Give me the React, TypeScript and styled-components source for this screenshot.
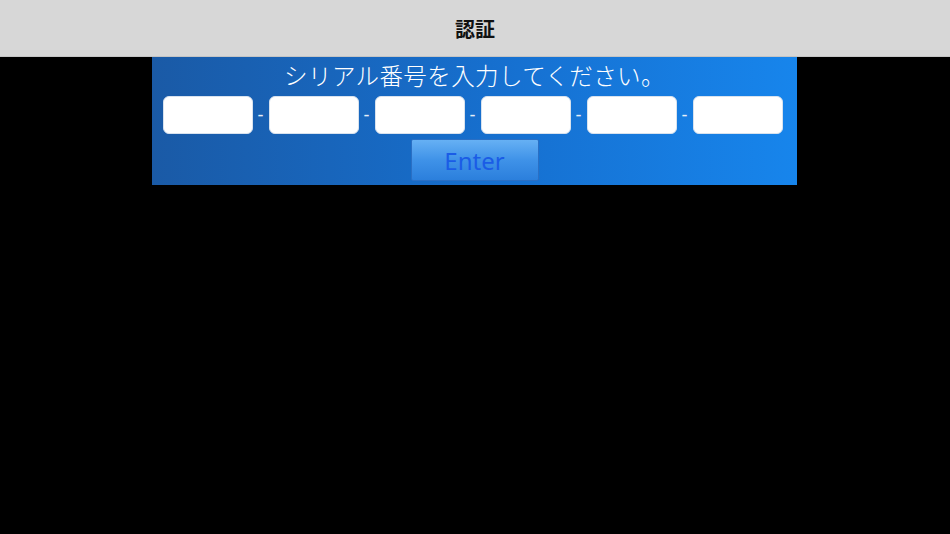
import React, { useState } from "react";
import styled, { createGlobalStyle } from "styled-components";

const GlobalStyle = createGlobalStyle`
  html, body {
    margin: 0;
    padding: 0;
    background: #000;
    font-family: "Noto Sans CJK JP", "Noto Sans", sans-serif;
  }
`;

const Page = styled.div`
  width: 950px;
  height: 534px;
  background: #000;
  display: flex;
  flex-direction: column;
  align-items: center;
`;

const NavBar = styled.header`
  width: 100%;
  height: 56px;
  flex: none;
  background: #d7d7d7;
  border-bottom: 1px solid #c4c4c4;
  display: flex;
  align-items: center;
  justify-content: center;
`;

const NavTitle = styled.h1`
  margin: 0;
  font-size: 20px;
  font-weight: 700;
  color: #111;
`;

const Panel = styled.section`
  width: 645px;
  height: 128px;
  box-sizing: border-box;
  margin-right: 1px;
  background: linear-gradient(90deg, #1a5aa6 0%, #1670d0 55%, #1785ec 100%);
  display: flex;
  flex-direction: column;
  align-items: center;
`;

const Prompt = styled.p`
  margin: 0;
  height: 37px;
  font-size: 23.5px;
  font-weight: 300;
  line-height: 36px;
  color: #fff;
  letter-spacing: 0.4px;
`;

const SerialRow = styled.div`
  display: flex;
  align-items: center;
  margin-top: 2px;
  padding-right: 4px;
`;

const Field = styled.input`
  width: 90px;
  height: 38px;
  box-sizing: border-box;
  border: 1px solid #d8e2ee;
  border-radius: 6px;
  background: #fff;
  outline: none;
  padding: 0 8px;
  font-size: 18px;
`;

const Dash = styled.span`
  width: 16px;
  text-align: center;
  color: #e6eef8;
  font-size: 18px;
  font-family: "Liberation Sans", sans-serif;
`;

const EnterButton = styled.button`
  margin-top: 5px;
  width: 128px;
  height: 42px;
  box-sizing: border-box;
  border: 1px solid #2a6fc4;
  border-radius: 2px;
  background: linear-gradient(180deg, #66b0f4 0%, #3f92e8 50%, #2b7fdc 100%);
  color: #1a5ce6;
  font-family: "Noto Sans", "Liberation Sans", sans-serif;
  font-size: 24px;
  cursor: pointer;
`;

export default function App() {
  const [parts, setParts] = useState<string[]>(["", "", "", "", "", ""]);

  const onChange = (i: number, value: string) => {
    const next = parts.slice();
    next[i] = value;
    setParts(next);
  };

  return (
    <>
      <GlobalStyle />
      <Page>
        <NavBar>
          <NavTitle>認証</NavTitle>
        </NavBar>
        <Panel>
          <Prompt>シリアル番号を入力してください。</Prompt>
          <SerialRow>
            {parts.map((p, i) => (
              <React.Fragment key={i}>
                {i > 0 && <Dash>-</Dash>}
                <Field value={p} onChange={e => onChange(i, e.currentTarget.value)} />
              </React.Fragment>
            ))}
          </SerialRow>
          <EnterButton>Enter</EnterButton>
        </Panel>
      </Page>
    </>
  );
}
